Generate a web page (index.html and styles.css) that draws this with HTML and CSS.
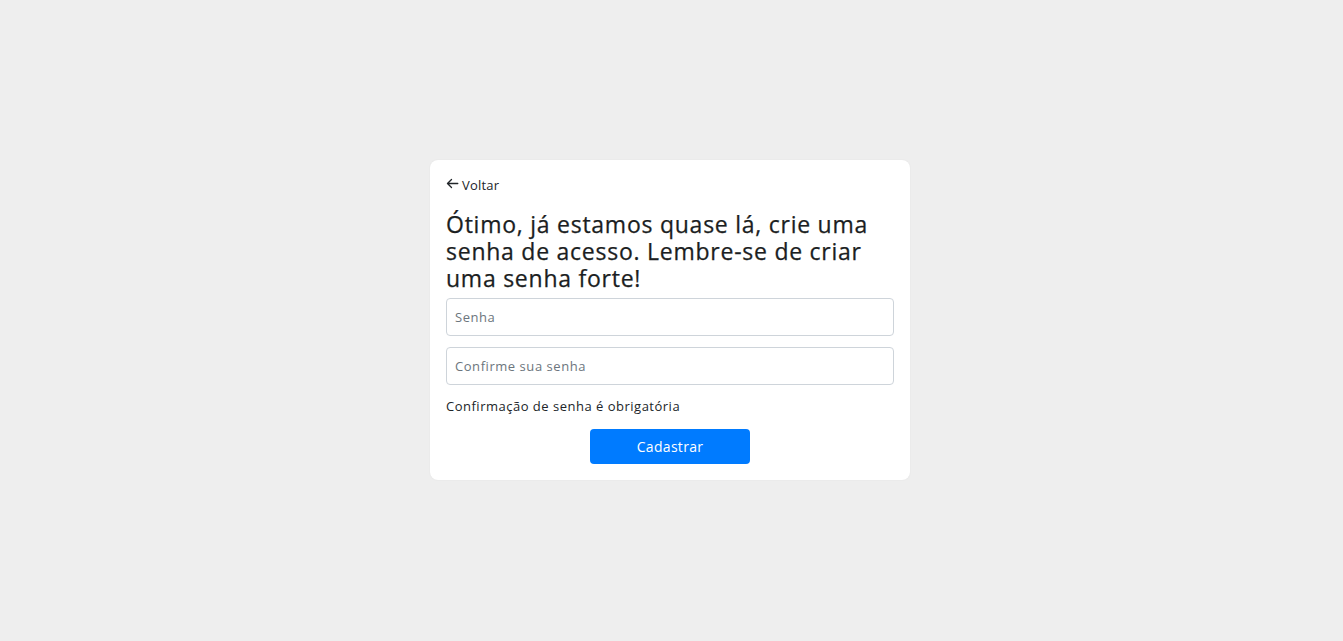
FILE: index.html
```html
<!DOCTYPE html>
<html lang="pt-BR">
<head>
<meta charset="utf-8">
<title>Cadastro</title>
<link rel="stylesheet" href="styles.css">
</head>
<body>
<main class="page">
  <section class="card">
    <a class="back" href="#">
      <svg class="back-icon" viewBox="0 0 16 16" width="13" height="13" aria-hidden="true"><path d="M14.5 8H1.8M6.8 3 1.8 8l5 5" fill="none" stroke="currentColor" stroke-width="1.6" stroke-linecap="round" stroke-linejoin="round"/></svg>
      <span>Voltar</span>
    </a>
    <h1 class="title">Ótimo, já estamos quase lá, crie uma senha de acesso. Lembre-se de criar uma senha forte!</h1>
    <form class="form">
      <input class="field" type="password" placeholder="Senha">
      <input class="field" type="password" placeholder="Confirme sua senha">
      <p class="error">Confirmação de senha é obrigatória</p>
      <button class="submit" type="button">Cadastrar</button>
    </form>
  </section>
</main>
</body>
</html>
```
FILE: styles.css
```css
* { box-sizing: border-box; }
html, body { margin: 0; height: 100%; }
body {
  background: #eeeeee;
  font-family: "Open Sans", "DejaVu Sans", sans-serif;
  color: #212529;
}
.page {
  height: 100%;
  display: flex;
  justify-content: center;
  align-items: center;
  padding: 0 3px 2px 0;
}
.card {
  width: 480px;
  background: #fff;
  border-radius: 8px;
  padding: 16px 16px 16px;
  box-shadow: 0 0 2px rgba(0,0,0,0.06);
}
.back {
  display: flex;
  align-items: center;
  gap: 3px;
  color: #212529;
  text-decoration: none;
  font-size: 13px;
  line-height: 18px;
  letter-spacing: 0.2px;
  margin-bottom: 17px;
}
.back-icon { margin-top: -2px; }
.title {
  margin: 0 0 6px;
  font-size: 23px;
  font-weight: 500;
  line-height: 27px;
  letter-spacing: 0.75px;
  color: #1b1e22;
  -webkit-text-stroke: 0.25px #1b1e22;
}
.form {
  display: flex;
  flex-direction: column;
}
.field {
  height: 38px;
  width: 100%;
  border: 1px solid #ced4da;
  border-radius: 4px;
  padding: 6px 8px;
  font-family: inherit;
  font-size: 13px;
  letter-spacing: 0.55px;
  color: #495057;
  margin-bottom: 11px;
}
.field::placeholder { color: #6c757d; }
.error {
  margin: 1px 0 14px;
  font-size: 13px;
  line-height: 18px;
  letter-spacing: 0.5px;
}
.submit {
  align-self: center;
  width: 160px;
  height: 35px;
  border: 0;
  border-radius: 4px;
  background: #007bff;
  color: #fff;
  font-family: inherit;
  font-size: 14px;
  letter-spacing: 0.3px;
}
```
